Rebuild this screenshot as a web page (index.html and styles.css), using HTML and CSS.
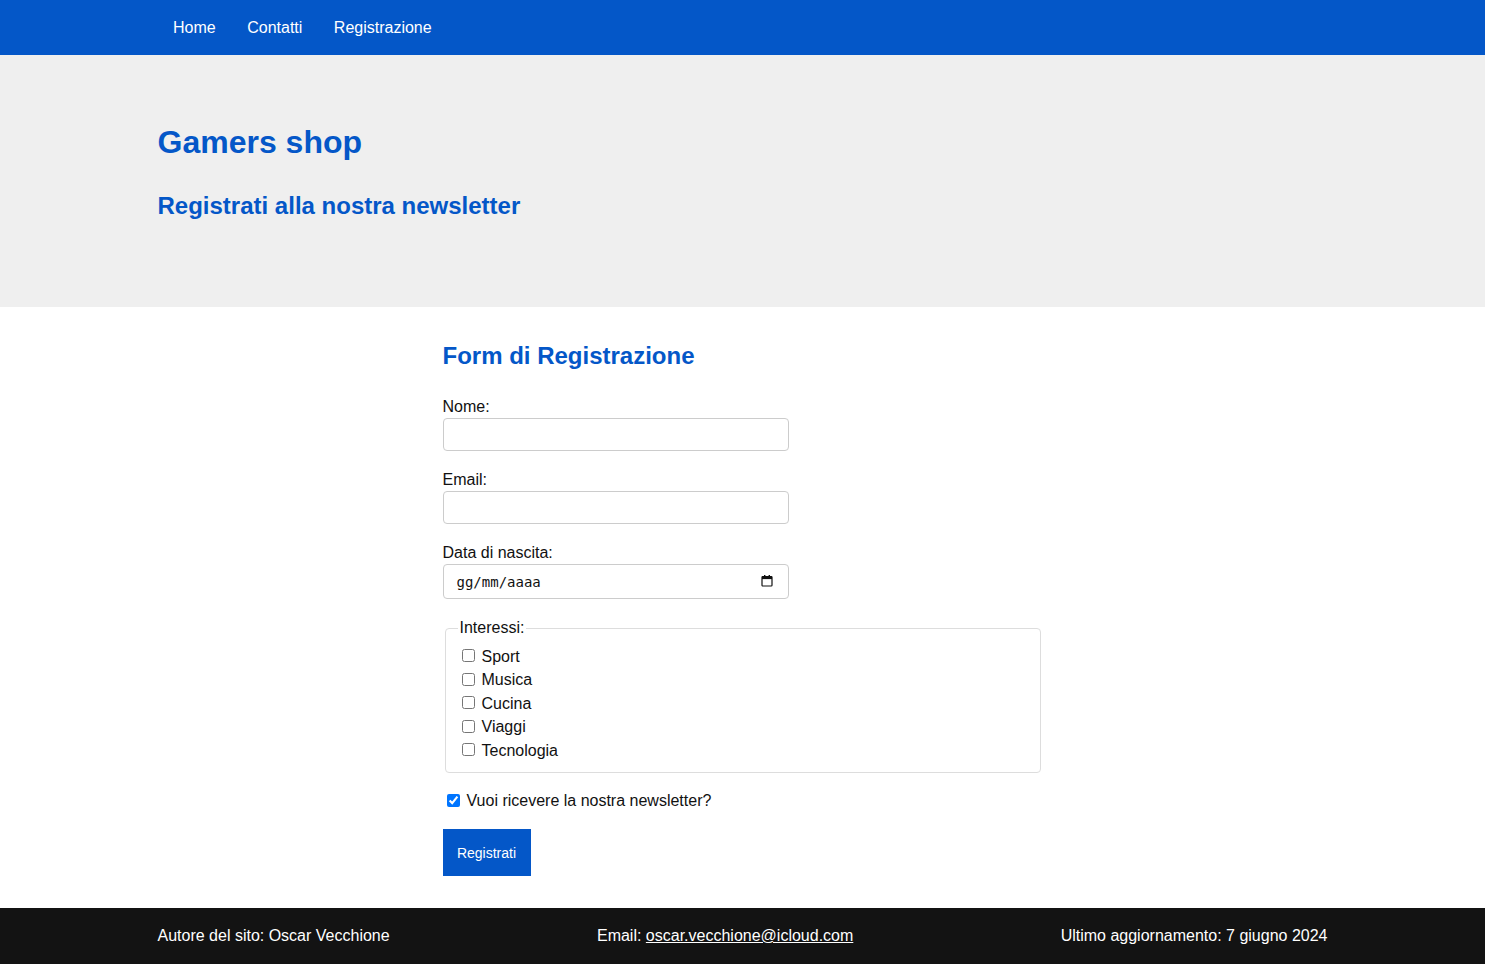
FILE: index.html
```html
<!DOCTYPE html>
<html lang="it">
<head>
<meta charset="utf-8">
<title>Gamers shop - Registrazione</title>
<link rel="stylesheet" href="styles.css">
</head>
<body>
<header class="topbar">
  <nav class="container nav">
    <a href="#" class="nav-link">Home</a>
    <a href="#" class="nav-link">Contatti</a>
    <a href="#" class="nav-link">Registrazione</a>
  </nav>
</header>
<section class="hero">
  <div class="container">
    <h1 class="hero-title">Gamers shop</h1>
    <h2 class="hero-sub">Registrati alla nostra newsletter</h2>
  </div>
</section>
<main class="form-wrap">
  <h2 class="form-title">Form di Registrazione</h2>
  <form class="reg-form">
    <div class="field">
      <label class="field-label" for="nome">Nome:</label>
      <input class="text-input" type="text" id="nome">
    </div>
    <div class="field">
      <label class="field-label" for="email">Email:</label>
      <input class="text-input" type="email" id="email">
    </div>
    <div class="field field-date">
      <label class="field-label" for="data">Data di nascita:</label>
      <div class="date-box">
        <input class="text-input date-input" type="text" id="data" placeholder="gg/mm/aaaa">
        <svg class="cal-icon" width="12" height="12" viewBox="0 0 12 12" aria-hidden="true">
          <rect x="1" y="1.5" width="10" height="9.5" rx="0.8" fill="none" stroke="#111" stroke-width="1.2"/>
          <rect x="1" y="1.5" width="10" height="2.6" fill="#111"/>
          <rect x="3" y="0" width="1.4" height="2" fill="#111"/>
          <rect x="7.6" y="0" width="1.4" height="2" fill="#111"/>
        </svg>
      </div>
    </div>
    <fieldset class="interests">
      <legend class="interests-legend">Interessi:</legend>
      <label class="check-row"><input type="checkbox" class="check"> Sport</label>
      <label class="check-row"><input type="checkbox" class="check"> Musica</label>
      <label class="check-row"><input type="checkbox" class="check"> Cucina</label>
      <label class="check-row"><input type="checkbox" class="check"> Viaggi</label>
      <label class="check-row"><input type="checkbox" class="check"> Tecnologia</label>
    </fieldset>
    <label class="check-row newsletter"><input type="checkbox" class="check" checked> Vuoi ricevere la nostra newsletter?</label>
    <button type="submit" class="submit-btn">Registrati</button>
  </form>
</main>
<footer class="footer">
  <div class="container footer-inner">
    <span>Autore del sito: Oscar Vecchione</span>
    <span>Email: <a href="#" class="footer-link">oscar.vecchione@icloud.com</a></span>
    <span>Ultimo aggiornamento: 7 giugno 2024</span>
  </div>
</footer>
</body>
</html>
```

FILE: styles.css
```css
* { box-sizing: border-box; }

body {
  margin: 0;
  font-family: "Liberation Sans", Arial, sans-serif;
  font-size: 16px;
  color: #111;
  background: #fff;
}

.container {
  width: 1170px;
  margin: 0 auto;
}

.topbar {
  background: #0457c8;
  height: 55px;
}

.nav {
  display: flex;
  align-items: center;
  height: 55px;
  padding-top: 1px;
}

.nav-link {
  color: #fff;
  text-decoration: none;
  padding: 0 16px 0 15.5px;
  font-size: 16px;
}

.hero {
  background: #efefef;
  height: 252px;
  padding-top: 67px;
}

.hero-title {
  margin: 0;
  color: #0457c8;
  font-size: 32px;
  line-height: 40px;
  font-weight: bold;
}

.hero-sub {
  margin: 30px 0 0;
  color: #0457c8;
  font-size: 24px;
  line-height: 28px;
  font-weight: bold;
}

.form-wrap {
  width: 600px;
  margin: 0 auto;
  padding: 34px 0 32px;
}

.form-title {
  margin: 0 0 27px;
  color: #0457c8;
  font-size: 24px;
  line-height: 30px;
  font-weight: bold;
}

.field {
  margin-bottom: 20px;
}

.field-label {
  display: block;
  line-height: 18px;
  margin-bottom: 2px;
}

.text-input {
  display: block;
  width: 346px;
  height: 33px;
  border: 1px solid #ccc;
  border-radius: 4px;
  padding: 0 8px;
  font-size: 14px;
  font-family: "Liberation Sans", Arial, sans-serif;
}

.field-date {
  margin-bottom: 20px;
}

.date-box {
  position: relative;
  width: 346px;
}

.date-input {
  height: 35px;
  padding-left: 13px;
  font-family: "DejaVu Sans Mono", monospace;
  font-size: 14px;
}

.date-input::placeholder {
  color: #111;
}

.cal-icon {
  position: absolute;
  right: 16px;
  top: 11px;
}

.interests {
  margin: 0 2px;
  border: 1px solid #ddd;
  border-radius: 4px;
  padding: 8px 12px 9px;
}

.interests-legend {
  padding: 0 2px;
  font-size: 16px;
  line-height: 18px;
}

.check-row {
  display: flex;
  align-items: center;
  height: 23.5px;
  font-size: 16px;
}

.check {
  width: 13px;
  height: 13px;
  margin: 0 7px 2px 4px;
}

.newsletter {
  margin-top: 17px;
}

.submit-btn {
  margin-top: 16px;
  background: #0457c8;
  color: #fff;
  border: none;
  width: 88px;
  height: 47px;
  font-size: 14px;
  font-family: "Liberation Sans", Arial, sans-serif;
  padding: 0;
}

.footer {
  background: #131313;
  color: #fff;
  height: 56px;
}

.footer-inner {
  display: flex;
  justify-content: space-between;
  align-items: center;
  height: 56px;
}

.footer-link {
  color: #fff;
}
```
